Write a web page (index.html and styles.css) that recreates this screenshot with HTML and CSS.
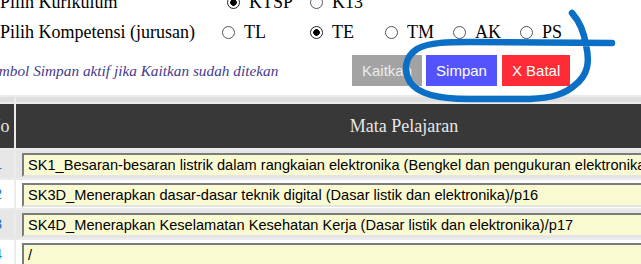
FILE: index.html
```html
<!DOCTYPE html>
<html lang="en">
<head>
  <meta charset="UTF-8">
  <meta name="viewport" content="width=device-width, initial-scale=1.0">
  <title>Kaitkan Mata Pelajaran</title>
  <link rel="stylesheet" href="styles.css">
</head>
<body>
  <div class="form">
    <div class="row kurikulum">
      <span class="label">Pilih Kurikulum</span>
      <label class="opt"><input type="radio" name="kurikulum" checked>KTSP</label>
      <label class="opt"><input type="radio" name="kurikulum">K13</label>
    </div>
    <div class="row kompetensi">
      <span class="label">Pilih Kompetensi (jurusan)</span>
      <label class="opt"><input type="radio" name="jurusan">TL</label>
      <label class="opt"><input type="radio" name="jurusan" checked>TE</label>
      <label class="opt"><input type="radio" name="jurusan">TM</label>
      <label class="opt"><input type="radio" name="jurusan">AK</label>
      <label class="opt"><input type="radio" name="jurusan">PS</label>
    </div>
    <div class="actions">
      <span class="hint">Tombol Simpan aktif jika Kaitkan sudah ditekan</span>
      <button class="btn btn-kaitkan" disabled>Kaitkan</button>
      <button class="btn btn-simpan">Simpan</button>
      <button class="btn btn-batal">X Batal</button>
    </div>
  </div>

  <table class="mapel">
    <tr class="band"><td></td><td></td></tr>
    <tr class="head">
      <th>No</th>
      <th>Mata Pelajaran</th>
    </tr>
    <tr class="odd">
      <td class="no"><a href="#">1</a></td>
      <td class="field"><input type="text" value="SK1_Besaran-besaran listrik dalam rangkaian elektronika (Bengkel dan pengukuran elektronika)/p15"></td>
    </tr>
    <tr class="even">
      <td class="no"><a href="#">2</a></td>
      <td class="field"><input type="text" value="SK3D_Menerapkan dasar-dasar teknik digital (Dasar listik dan elektronika)/p16"></td>
    </tr>
    <tr class="odd">
      <td class="no"><a href="#">3</a></td>
      <td class="field"><input type="text" value="SK4D_Menerapkan Keselamatan Kesehatan Kerja (Dasar listik dan elektronika)/p17"></td>
    </tr>
    <tr class="even">
      <td class="no"><a href="#">4</a></td>
      <td class="field"><input type="text" value="/"></td>
    </tr>
  </table>

  <!-- hand-drawn marker around the buttons -->
  <svg class="marker" width="641" height="264" viewBox="0 0 641 264">
    <path d="M572,13 C580,22 584,32 586,45 C590,62 588,75 575,85 C565,94 552,98 530,99 L468,99 C440,99 418,94 410,82 C403,70 405,57 417,49 C429,42 450,42 470,42 L612,43"
          fill="none" stroke="#0b6fc6" stroke-width="6.5" stroke-linecap="round" stroke-linejoin="round"/>
  </svg>
</body>
</html>
```

FILE: styles.css
```css
html, body {
  overflow: hidden;
}
body {
  margin: 0;
  font-family: "Liberation Serif", "Times New Roman", serif;
  font-size: 18px;
  color: #000;
  background: #fff;
}
.form {
  margin-top: -13px;
}
.row {
  display: grid;
  height: 30px;
  align-items: center;
  white-space: nowrap;
}
.kurikulum {
  grid-template-columns: 227px 83px auto;
}
.kompetensi {
  grid-template-columns: 222px 88px 75px 68px 67px auto;
}
.opt {
  display: flex;
  align-items: center;
}
.opt input {
  appearance: none;
  -webkit-appearance: none;
  width: 13px;
  height: 13px;
  margin: 0 9px 0 0;
  border: 1px solid #555;
  border-radius: 50%;
  background: #fff;
}
.opt input:checked {
  border-color: #222;
  background: radial-gradient(circle, #000 0 3px, #fff 3.6px);
}
.actions {
  display: flex;
  align-items: center;
  gap: 4px;
  margin-top: 8px;
  height: 31px;
}
.hint {
  width: 364px;
  margin-left: -16px;
  font-style: italic;
  font-size: 15.3px;
  color: #463a8c;
  white-space: nowrap;
}
.btn {
  height: 31px;
  padding: 0 10px;
  border: none;
  font-family: "Liberation Sans", Arial, sans-serif;
  font-size: 15px;
  color: #fff;
  cursor: pointer;
}
.btn-kaitkan {
  background: #a3a3a3;
  color: #ececec;
  cursor: default;
}
.btn-simpan {
  background: #5353ff;
}
.btn-batal {
  margin-left: 1px;
  background: #ff2b36;
}
.mapel {
  margin-top: 9px;
  margin-left: -22px;
  width: 816px;
  border-collapse: separate;
  border-spacing: 2px;
  background: #ebebeb;
}
.mapel td, .mapel th {
  padding: 0;
}
.band td {
  height: 5px;
  background: #dedede;
}
.head th {
  height: 44px;
  background: #383838;
  color: #e6e6e6;
  font-weight: normal;
  font-size: 18px;
}
.head th:first-child {
  width: 31px;
  padding-left: 3px;
}
.odd td {
  background: #e6e6e6;
}
.even td {
  background: #fff;
}
.no {
  height: 28px;
  text-align: right;
  padding-right: 12px !important;
  font-family: "Liberation Sans", Arial, sans-serif;
  font-size: 14px;
}
.no a {
  color: #2a6ebb;
  text-decoration: none;
}
.field {
  padding: 3px 6px 1px !important;
}
.field input {
  display: block;
  box-sizing: border-box;
  width: 100%;
  height: 24px;
  margin: 0;
  padding: 0 4px;
  border-width: 2px;
  border-style: solid;
  border-color: #7c7c7c #e4e4e4 #e4e4e4 #7c7c7c;
  background: #fafad2;
  font-family: "Liberation Sans", Arial, sans-serif;
  font-size: 14.6px;
  color: #000;
}
.marker {
  position: absolute;
  top: 0;
  left: 0;
  pointer-events: none;
}
```
